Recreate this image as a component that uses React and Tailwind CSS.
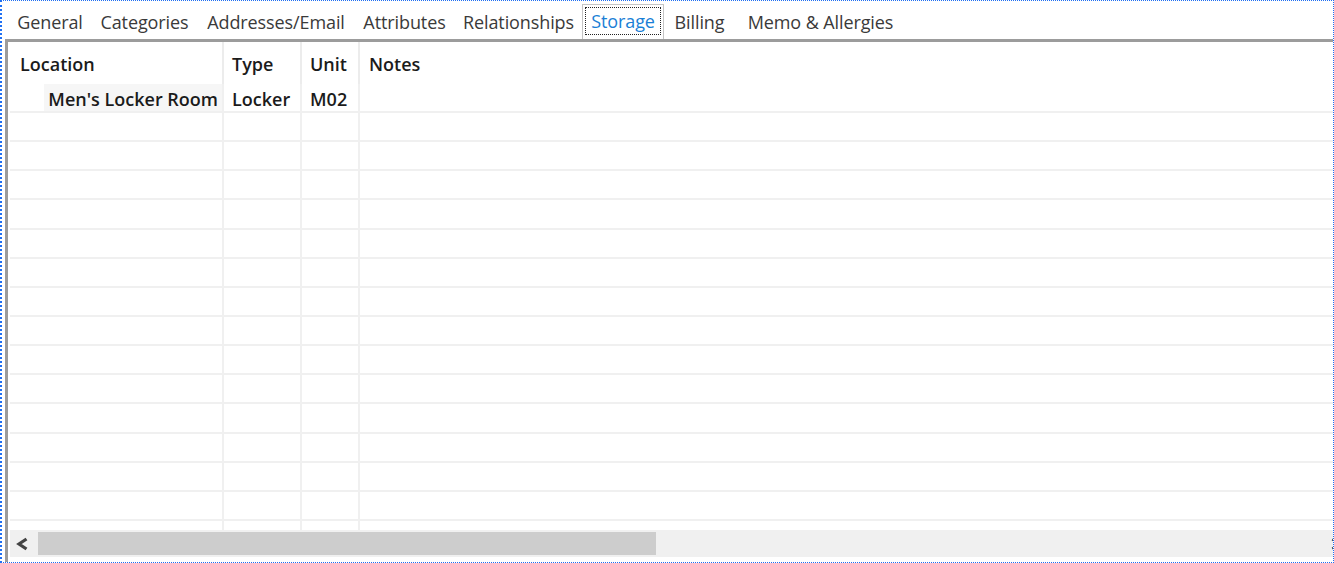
import { useState } from 'react';

const tabs = [
    { label: 'General', w: 'w-[82px]' },
    { label: 'Categories', w: 'w-[107px]' },
    { label: 'Addresses/Email', w: 'w-[156px]' },
    { label: 'Attributes', w: 'w-[101px]' },
    { label: 'Relationships', w: 'w-[127px]' },
    { label: 'Storage', w: 'w-[82px]' },
    { label: 'Billing', w: 'w-[71px]' },
    { label: 'Memo & Allergies', w: 'w-[171px]' },
];

const rows = [
    { location: "Men's Locker Room", type: 'Locker', unit: 'M02', notes: '' },
];

function Chevron({ dir }) {
    return (
        <svg width="13" height="14" viewBox="0 0 13 14" className="shrink-0">
            <path
                d={dir === 'left' ? 'M10.5 2 L3 7 L10.5 12' : 'M2.5 2 L10 7 L2.5 12'}
                fill="none"
                stroke="#444"
                strokeWidth="3.2"
            />
        </svg>
    );
}

export default function App() {
    const [active, setActive] = useState('Storage');
    const filler = Array.from({ length: 16 });

    return (
        <div
            className="w-[1334px] h-[563px] bg-white border border-l-2 border-dotted border-[#1f6ff2] overflow-hidden flex flex-col"
            style={{ fontFamily: '"Open Sans", "Noto Sans", sans-serif' }}
        >
            {/* Tab strip */}
            <div className="h-[38px] shrink-0 flex items-end pl-[7px]">
                {tabs.map((t) => {
                    const sel = t.label === active;
                    return (
                        <button
                            key={t.label}
                            onClick={() => setActive(t.label)}
                            className={
                                sel
                                    ? `${t.w} h-[35px] bg-white border border-b-0 border-[#c4c4c4] p-[2px] pb-[4px]`
                                    : `${t.w} h-[33px] pb-[1px] flex items-center justify-center text-[18px] tracking-[-0.1px] text-[#3a3a3a]`
                            }
                        >
                            {sel ? (
                                <span className="w-full h-full flex items-center justify-center border border-dotted border-[#222] text-[18px] tracking-[-0.1px] text-[#1a7fd6]">
                                    {t.label}
                                </span>
                            ) : (
                                t.label
                            )}
                        </button>
                    );
                })}
            </div>

            {/* Panel */}
            <div className="ml-[3px] flex-1 flex flex-col border-l-[3px] border-t-[3px] border-[#9c9c9c]">
                <div className="h-[488px] shrink-0 overflow-hidden ml-[2px] text-[18px] font-semibold text-[#1b1b1b]">
                    {/* Header */}
                    <div className="flex h-[42px]">
                        <div className="w-[214px] pl-[10px] pt-[2px] flex items-center border-r-2 border-[#ececec]">Location</div>
                        <div className="w-[78px] pl-2 pt-[2px] flex items-center border-r-2 border-[#ececec]">Type</div>
                        <div className="w-[58px] pl-2 pt-[2px] flex items-center border-r-2 border-[#ececec]">Unit</div>
                        <div className="flex-1 pl-[9px] pt-[2px] flex items-center">Notes</div>
                    </div>

                    {/* Rows */}
                    {rows.map((r) => (
                        <div key={r.location} className="flex h-[29px] border-b-2 border-[#f0f0f0]">
                            <div className="w-[214px] flex justify-end border-r-2 border-[#f0f0f0]">
                                <span className="bg-[#f6f6f6] pl-1 pr-1 pt-[3px] flex items-center">{r.location}</span>
                            </div>
                            <div className="w-[78px] pl-2 pt-[3px] flex items-center border-r-2 border-[#f0f0f0]">{r.type}</div>
                            <div className="w-[58px] pl-2 pt-[3px] flex items-center border-r-2 border-[#f0f0f0]">{r.unit}</div>
                            <div className="flex-1 pl-[9px] pt-[3px] flex items-center">{r.notes}</div>
                        </div>
                    ))}
                    {filler.map((_, i) => (
                        <div key={i} className="flex h-[29.15px] border-b-2 border-[#f0f0f0]">
                            <div className="w-[214px] border-r-2 border-[#f0f0f0]" />
                            <div className="w-[78px] border-r-2 border-[#f0f0f0]" />
                            <div className="w-[58px] border-r-2 border-[#f0f0f0]" />
                            <div className="flex-1" />
                        </div>
                    ))}
                </div>

                {/* Horizontal scrollbar */}
                <div className="ml-[2px] h-[27px] shrink-0 bg-[#f0f0f0] flex items-center overflow-hidden">
                    <div className="w-[28px] h-full flex items-center pl-[6px]">
                        <Chevron dir="left" />
                    </div>
                    <div className="w-[618px] h-[23px] bg-[#cdcdcd]" />
                    <div className="flex-1" />
                    <div className="w-[3px] h-full flex items-center overflow-hidden">
                        <Chevron dir="right" />
                    </div>
                </div>
            </div>
        </div>
    );
}
